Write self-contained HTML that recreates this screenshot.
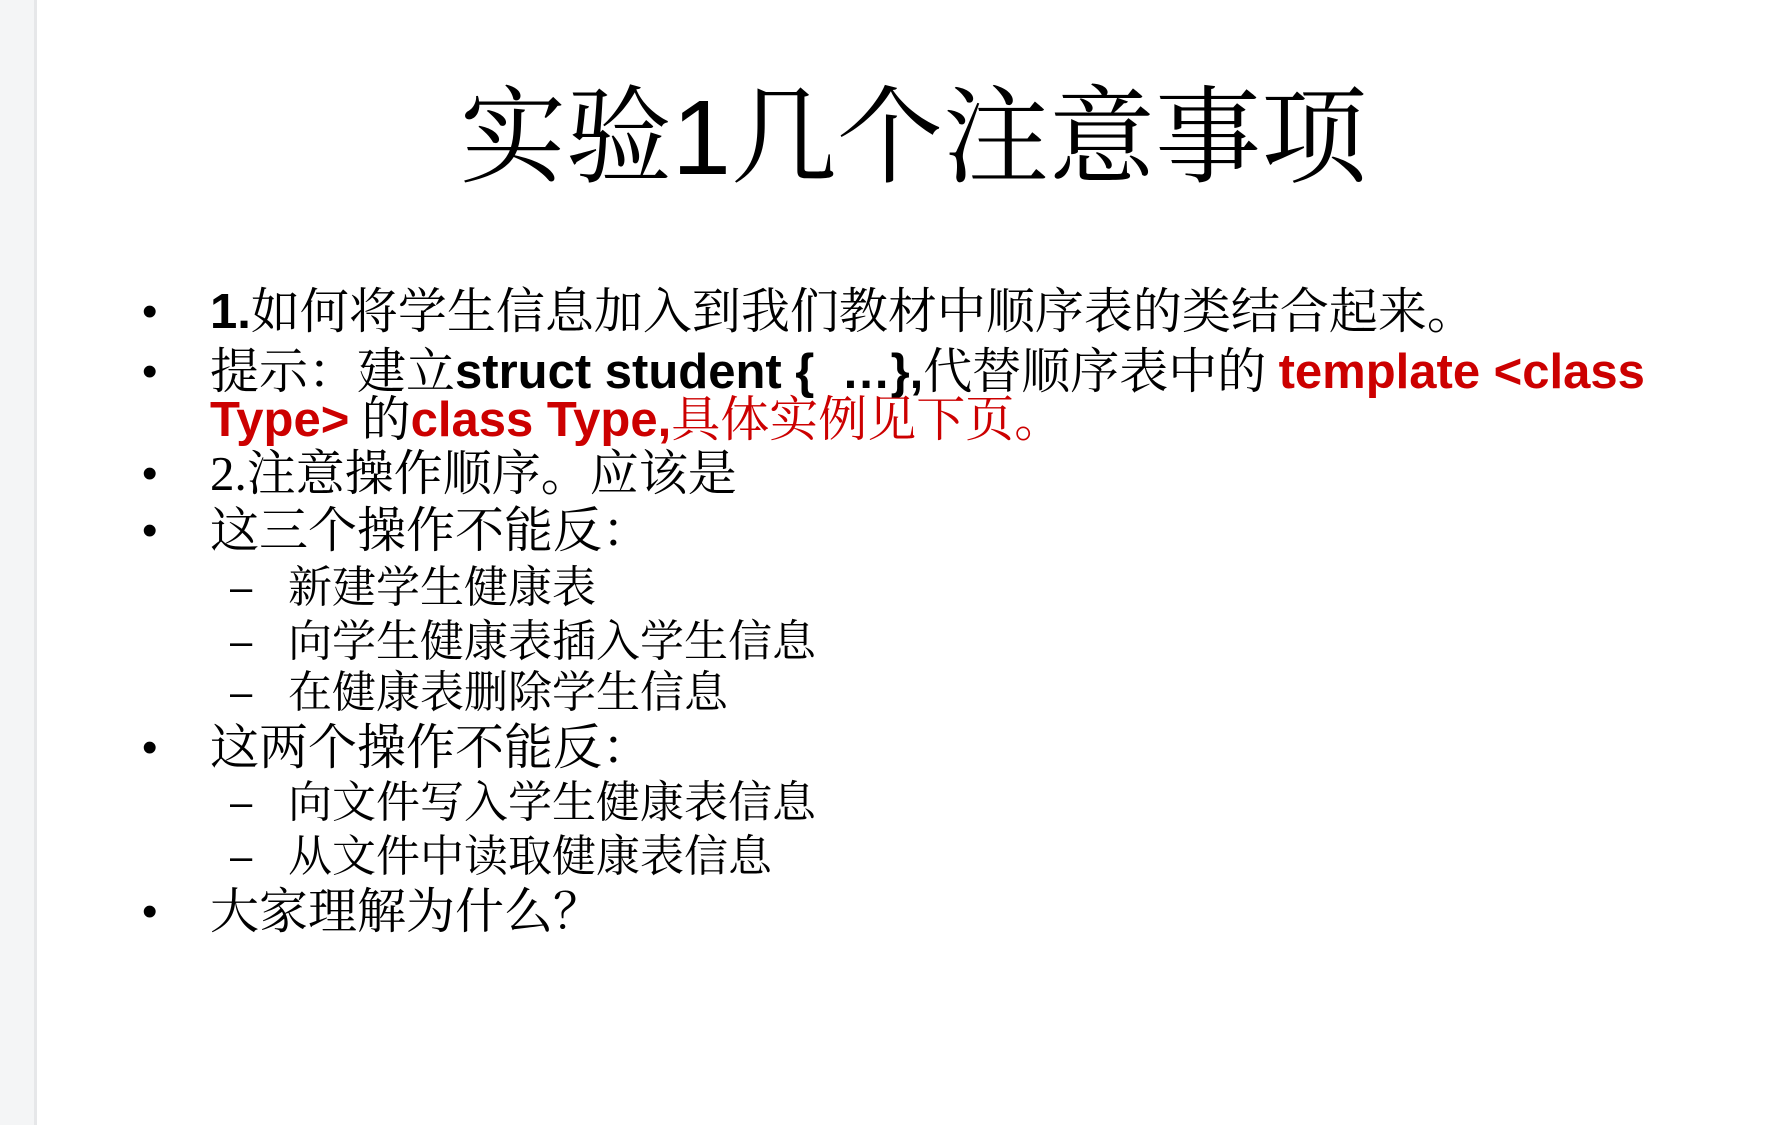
<!DOCTYPE html>
<html><head><meta charset="utf-8">
<style>
html,body{margin:0;padding:0;}
body{width:1766px;height:1125px;background:#fff;position:relative;overflow:hidden;font-family:"Liberation Serif","Noto Serif CJK SC",serif;color:#000;}
.strip{position:absolute;left:0;top:0;width:34px;height:1125px;background:#f4f5f6;border-right:3px solid #e6e7e9;}
.t{position:absolute;white-space:nowrap;}
.title{left:460px;top:76px;font-size:106px;line-height:124px;}
.title b{font-family:"Liberation Sans",sans-serif;font-weight:normal;}
.l{font-size:49px;line-height:52px;}
.s{font-size:44px;line-height:48px;}
.b{position:absolute;left:142px;font-size:44px;font-family:"Liberation Sans",sans-serif;}
.d{position:absolute;left:230px;font-family:"Liberation Sans",sans-serif;font-size:40px;}
.sans{font-family:"Liberation Sans",sans-serif;font-weight:bold;}
.red{color:#cc0000;}
</style></head><body>
<div class="strip"></div>
<div class="t title">实验<b>1</b>几个注意事项</div>

<div class="t l" style="left:0;top:286px;width:1766px"><span class="b" style="top:0">•</span><span style="position:absolute;left:210px"><span class="sans">1.</span>如何将学生信息加入到我们教材中顺序表的类结合起来。</span></div>

<div class="t l" style="left:0;top:346px;width:1766px"><span class="b">•</span><span style="position:absolute;left:210px">提示：建立<span class="sans">struct student {&nbsp; …},</span>代替顺序表中的 <span class="sans red">template &lt;class</span></span></div>
<div class="t l" style="left:210px;top:394px"><span class="sans red">Type&gt;</span> 的<span class="sans red">class Type,</span><span class="red">具体实例见下页。</span></div>

<div class="t l" style="left:0;top:448px;width:1766px"><span class="b">•</span><span style="position:absolute;left:210px">2.注意操作顺序。应该是</span></div>
<div class="t l" style="left:0;top:505px;width:1766px"><span class="b">•</span><span style="position:absolute;left:210px">这三个操作不能反：</span></div>
<div class="t s" style="left:0;top:564px;width:1766px"><span class="d">–</span><span style="position:absolute;left:288px">新建学生健康表</span></div>
<div class="t s" style="left:0;top:618px;width:1766px"><span class="d">–</span><span style="position:absolute;left:288px">向学生健康表插入学生信息</span></div>
<div class="t s" style="left:0;top:669px;width:1766px"><span class="d">–</span><span style="position:absolute;left:288px">在健康表删除学生信息</span></div>
<div class="t l" style="left:0;top:722px;width:1766px"><span class="b">•</span><span style="position:absolute;left:210px">这两个操作不能反：</span></div>
<div class="t s" style="left:0;top:779px;width:1766px"><span class="d">–</span><span style="position:absolute;left:288px">向文件写入学生健康表信息</span></div>
<div class="t s" style="left:0;top:833px;width:1766px"><span class="d">–</span><span style="position:absolute;left:288px">从文件中读取健康表信息</span></div>
<div class="t l" style="left:0;top:886px;width:1766px"><span class="b">•</span><span style="position:absolute;left:210px">大家理解为什么？</span></div>
</body></html>
